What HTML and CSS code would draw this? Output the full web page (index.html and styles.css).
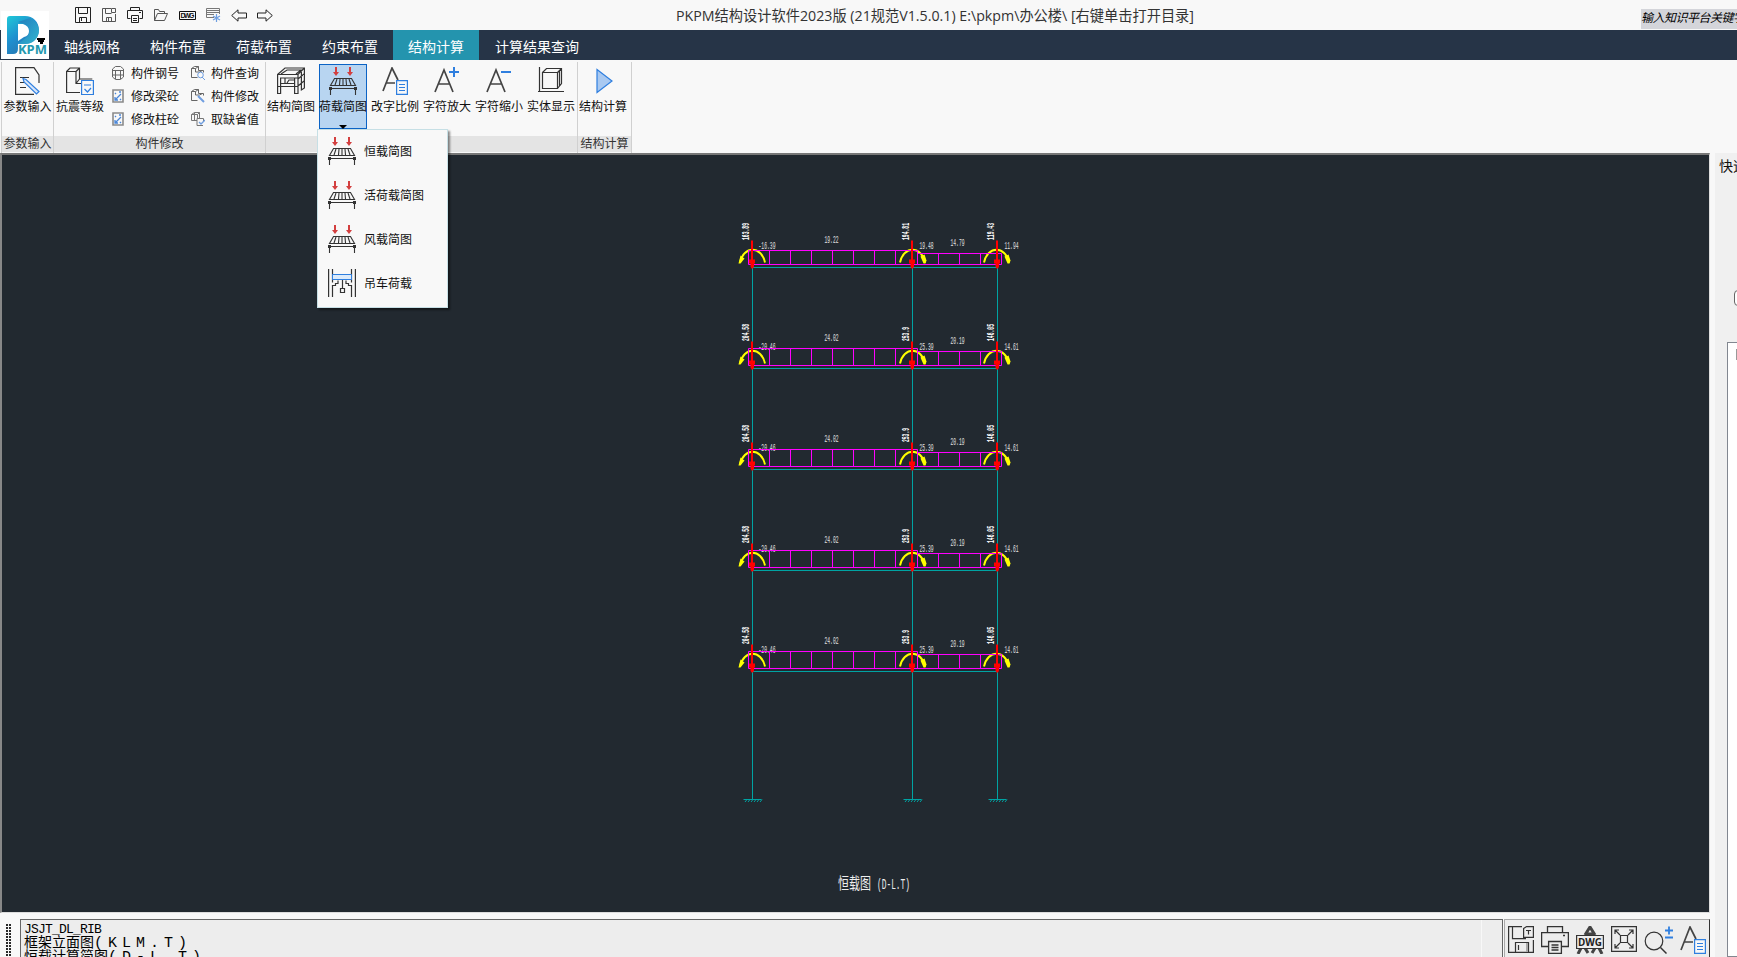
FILE: index.html
```html
<!DOCTYPE html>
<html lang="zh-CN">
<head>
<meta charset="utf-8">
<title>PKPM结构设计软件2023版</title>
<link rel="stylesheet" href="styles.css">
</head>
<body>
<svg class="defs" width="0" height="0">
  <symbol id="i-load" viewBox="0 0 28 28"><g fill="none" stroke="#333" stroke-width="1.1"><path d="M5.5 11.5h17l4 7h-25zM8 12l-2 6M11 12l-.5 6M14 12v6M17 12l.5 6M20 12l2 6M1.500 21.500h25M1.500 20v8M26.500 20v8"/></g><path fill="#333" d="M0 20h3v3H0zM25 20h3v3h-3z"/><path fill="#d33f3f" d="M6 0h2v5h2L7 9 4 5h2zM20 0h2v5h2l-3 4-3-4h2z"/></symbol>
  <symbol id="i-save" viewBox="0 0 16 16"><path fill="none" stroke="#222" d="M.5.5h15v15H.5zM3.500.500v6h9v-6M4.500 15.500v-5h7v5M6.500 11v3"/></symbol>
  <symbol id="i-print" viewBox="0 0 28 28"><path fill="none" stroke="#333" stroke-width="1.3" d="M6.500 6V.6h15V6M7 20.500H.6V6.600h26.800v13.900H21M7.600 15.500h12.800v12H7.600zM10.500 19h7M10.500 21.500h7M10.500 24h7M22 9.500h2"/></symbol>
  <symbol id="i-text" viewBox="0 0 26 28"><path fill="none" stroke="#444" stroke-width="1.700" d="M1 24L10 1l6 12M4.500 16H13"/><path fill="#f8f8f8" stroke="#2f7fdf" stroke-width="1.200" d="M14.600 13.600h10.800v13.800H14.600zM17 17.500h6M17 20.500h6M17 23.500h6"/></symbol>
  <symbol id="i-edit" viewBox="0 0 14 14"><path fill="none" stroke="#8a8a8a" stroke-width="1.600" d="M2 1h10v12H2z"/><path fill="none" stroke="#4a86d8" stroke-width="1.300" d="M4 11l6-6M4 4l1 1M9 10l1 1M4 8v3h3M8 3h2"/></symbol>
  <symbol id="i-part" viewBox="0 0 14 14"><path fill="none" stroke="#666" d="M.5 2.500h4v3.500h4M.500 2.500v9h6M.500 2.500l3-2h4l-3 2M7.500.500v4h5v2M8.500 6l3-1.500"/></symbol>
</svg>
<header class="titlebar">
  <div class="quick">
    <svg width="16" height="16"><use href="#i-save"/></svg>
    <svg width="14" height="14" viewBox="0 0 14 14"><path fill="none" stroke="#555" d="M9 .5H.5v13h13V6M3.500.500v5h6M4.500 13.500v-4h5v4M6.500 10v3M9.500.500h4v4h-4z"/></svg>
    <svg width="17" height="16" viewBox="0 0 17 16"><path fill="none" stroke="#222" d="M3.500 3.500v-3h9v3M3.500 11.500h-3v-8h15v8h-3M4.500 8.500h7v7h-7zM6 11.500h4M6 13.500h4M12 5.500h2"/></svg>
    <svg width="14" height="12" viewBox="0 0 14 12"><path fill="none" stroke="#555" d="M.5 11.500v-11h4l1 2h5v2M.500 11.500l3-7h10l-3 7z"/></svg>
    <svg width="17" height="9" viewBox="0 0 17 9"><path fill="#f8f8f8" stroke="#111" d="M.5.500h16v8H.500z"/><text class="dwg-sm" x="1.500" y="7" textLength="14">DWG</text></svg>
    <svg width="15" height="15" viewBox="0 0 15 15"><path fill="none" stroke="#777" d="M8 9.500H.500v-9h13V6M0 2.500h14M0 4.500h14M0 6.500h8"/><path stroke="#6f9ee0" stroke-width="1.200" d="M10.500 6v8M7 8l7 4M7 12l7-4"/></svg>
    <svg width="16" height="13" viewBox="0 0 16 13"><path fill="none" stroke="#222" d="M.7 6.500L7 .800V4h8.500v5H7v3.200z"/></svg>
    <svg width="16" height="13" viewBox="0 0 16 13"><path fill="none" stroke="#222" d="M15.300 6.500L9 .800V4H.500v5H9v3.200z"/></svg>
  </div>
  <div class="title"><svg width="530" height="26"><text x="0" y="17" textLength="518" lengthAdjust="spacingAndGlyphs">PKPM结构设计软件2023版 (21规范V1.5.0.1) E:\pkpm\办公楼\ [右键单击打开目录]</text></svg></div>
  <div class="search">输入知识平台关键字</div>
</header>
<nav class="tabs">
  <div class="logo">
    <svg width="48" height="48" viewBox="0 0 48 48"><defs><linearGradient id="lg" x1="0" y1="0" x2=".7" y2="1"><stop offset="0" stop-color="#1fc9d8"/><stop offset=".5" stop-color="#1f8fcf"/><stop offset="1" stop-color="#2a70a8"/></linearGradient><linearGradient id="lg2" x1="0" y1="0" x2="1" y2="1"><stop offset="0" stop-color="#2468b0"/><stop offset="1" stop-color="#35d3dc"/></linearGradient></defs>
      <path fill="url(#lg)" d="M6 8q0-3 3-3h15c8 0 14 6 14 14s-6 14-14 14h-7v5q0 5-5 5H6z"/><path fill="url(#lg2)" d="M17 11l6 2q8 4 4 12l-10 8h7c8 0 14-6 14-14q-1-8-9-12z" opacity=".7"/><path fill="#fff" d="M17 13h5q6 2 6 7t-5 6l-6 4z"/>
      <path d="M36 27h8v2h-1v2h-1v2h-3v-2h-2v-2h-1z"/><text class="kpm" x="17" y="43" textLength="29" lengthAdjust="spacingAndGlyphs">KPM</text></svg>
  </div>
  <span class="tab">轴线网格</span><span class="tab">构件布置</span><span class="tab">荷载布置</span><span class="tab">约束布置</span><span class="tab on">结构计算</span><span class="tab">计算结果查询</span>
</nav>
<section class="ribbon">
  <div class="group">
    <div class="tools"><div class="tool"><svg width="28" height="28" viewBox="0 0 28 28"><path fill="none" stroke="#333" stroke-width="1.200" d="M25 16V8l-5-7.400H1.600v26.800H20M6 10.500h9M6 15.500h8M6 20.500h6"/><path fill="#d7e6fa" stroke="#2f7fdf" stroke-width="1.200" d="M9 11.500l3 1 13 12-2.500 2.500L10 15z"/></svg>参数输入</div></div>
    <div class="caption">参数输入</div>
  </div>
  <div class="group">
    <div class="tools">
      <div class="tool"><svg width="28" height="28" viewBox="0 0 28 28"><path fill="none" stroke="#333" stroke-width="1.200" d="M14 25.500H.6V4.500H10v12h5M.600 4.500L4 1h9.500v11h12.800M10 4.500L13.500 1M10 16.500l3.500-4.500"/><path fill="#f8f8f8" stroke="#2f7fdf" stroke-width="1.200" d="M15.600 13.500h11.800v14H15.600zM18 18h7M18.500 22l3 3 3.500-4"/></svg>抗震等级</div>
      <div class="mini-grid">
        <div class="mini"><svg width="14" height="14" viewBox="0 0 14 14"><path fill="none" stroke="#666" d="M1.500 3l3-2.500h5l3 2.500v8l-3 2.500h-5l-3-2.500zM1.500 4.500h11M4.500 5v8M9.500 5v8M1 9h12"/></svg>构件钢号</div>
        <div class="mini"><svg width="14" height="14"><use href="#i-part"/><circle cx="9.500" cy="9" r="2.800" fill="#f8f8f8" stroke="#6f9ee0"/><path stroke="#6f9ee0" d="M11 11l3 3"/></svg>构件查询</div>
        <div class="mini"><svg width="14" height="14"><use href="#i-edit"/></svg>修改梁砼</div>
        <div class="mini"><svg width="14" height="14"><use href="#i-part"/><path stroke="#6f9ee0" stroke-width="2" d="M7 7l6 6"/></svg>构件修改</div>
        <div class="mini"><svg width="14" height="14"><use href="#i-edit"/></svg>修改柱砼</div>
        <div class="mini"><svg width="14" height="14" viewBox="0 0 14 14"><path fill="none" stroke="#777" d="M.5 2.500l3-2h5v6M.500 2.500h6v6h-6zM6.500 2.500l2-2M3.500.500v8"/><path fill="#f8f8f8" stroke="#777" d="M12 13.500H6v-7h6.500v3"/><path stroke="#6f9ee0" stroke-width="1.300" fill="none" d="M8 10l2 2 4-4"/></svg>取缺省值</div>
      </div>
    </div>
    <div class="caption">构件修改</div>
  </div>
  <div class="group">
    <div class="tools">
      <div class="tool"><svg width="28" height="28" viewBox="0 0 28 28"><path fill="none" stroke="#333" stroke-width="1.200" d="M.600 7.500L8 1h19.400L21 7.500zM.600 7.500v19h3V11h14v15.500h3.400v-19M3.600 11h17.400M4 7L10 3h14l-5 4M27.400 1v20l-3 2V5M.600 19.500H21M4 16.500h14M8 11v5M21 19l6-5M21 12l6-5M10 16l2-3h6"/></svg>结构简图</div>
      <div class="tool active"><svg width="28" height="28"><use href="#i-load"/></svg>荷载简图<i class="caret"></i>
        <div class="menu">
          <div class="item"><svg width="28" height="28"><use href="#i-load"/></svg>恒载简图</div>
          <div class="item"><svg width="28" height="28"><use href="#i-load"/></svg>活荷载简图</div>
          <div class="item"><svg width="28" height="28"><use href="#i-load"/></svg>风载简图</div>
          <div class="item"><svg width="28" height="28" viewBox="0 0 28 28"><path fill="none" stroke="#333" stroke-width="1.200" d="M.600 0v28M27.400 0v28M4.500 0v13.500M10 11.500v3H7.500v2h-3V28M23.500 0v13.500M18 11.500v3h2.500v2h3V28M14.500 11v8M12.500 19.500h4v4h-4z"/><path fill="#dcebfb" stroke="#2f7fdf" d="M4.500 5.500h19v5h-19z"/></svg>吊车荷载</div>
        </div>
      </div>
      <div class="tool"><svg width="26" height="28"><use href="#i-text"/></svg>改字比例</div>
      <div class="tool"><svg width="26" height="28" viewBox="0 0 26 28"><path fill="none" stroke="#444" stroke-width="1.700" d="M1 25L10 3l9 22M4.500 17h11"/><path stroke="#2f7fdf" stroke-width="2" d="M15 5h10M20 0v10"/></svg>字符放大</div>
      <div class="tool"><svg width="26" height="28" viewBox="0 0 26 28"><path fill="none" stroke="#444" stroke-width="1.700" d="M1 25L10 3l9 22M4.500 17h11"/><path stroke="#2f7fdf" stroke-width="2" d="M15 5h10"/></svg>字符缩小</div>
      <div class="tool"><svg width="26" height="28" viewBox="0 0 26 28"><path fill="none" stroke="#333" stroke-width="1.200" d="M1.500 0v24.500M0 24.500h26M4.500 5.500h15v16h-15zM4.500 5.500l4-4h15v15l-4 5M19.500 5.500l4-4M21.500 4v16"/></svg>实体显示</div>
    </div>
    <div class="caption"></div>
  </div>
  <div class="group">
    <div class="tools"><div class="tool"><svg width="28" height="28" viewBox="0 0 28 28"><path fill="#a9c9f1" stroke="#2f7fdf" stroke-width="1.200" d="M8 2.500l15 11.500L8 25.500z"/></svg>结构计算</div></div>
    <div class="caption">结构计算</div>
  </div>
</section>
<main class="work">
  <div class="canvas"><svg id="frame" width="1707" height="757" viewBox="2 155 1707 757"></svg></div>
  <aside class="side"><div class="side-title">快速</div><div class="radio"></div><div class="list"><i></i></div></aside>
  <footer class="bottom">
    <div class="grip"></div>
    <div class="console">
      <div class="line mono">JSJT_DL_RIB</div>
      <div class="line">框架立面图<span class="wide">(KLM.T)</span></div>
      <div class="line">恒载计算简图<span class="wide">(D-L.T)</span></div>
    </div>
    <div class="viewbar">
      <svg width="26" height="27" viewBox="0 0 26 27"><path fill="none" stroke="#333" stroke-width="1.200" d="M14 .6H.6v25.800h24.800V14M4.500.600v12H18M7.500 26v-9.500h13V26M10.500 19v5"/><path fill="#eee" stroke="#333" stroke-width="1.200" d="M15.600 2.600l3-2h6.800v10.800h-9.800zM18 4.500h5M20.500 4.500v4"/><path fill="#aaa" d="M18 17h2v9h-2z"/></svg>
      <svg width="28" height="28"><use href="#i-print"/></svg>
      <svg width="28" height="28" viewBox="0 0 28 28"><path fill="none" stroke="#444" stroke-width="3" d="M9 9l5-8 5 8M6 20l-4 8M22 20l4 8M9 8h10M9 22l3 5M19 22l-3 5"/><path fill="#eee" stroke="#333" stroke-width="1.200" d="M.6 9.500h26.800v13H.6z"/><text class="dwg" x="2" y="20" textLength="24" lengthAdjust="spacingAndGlyphs">DWG</text></svg>
      <svg width="26" height="26" viewBox="0 0 26 26"><path fill="none" stroke="#333" stroke-width="1.200" d="M.6.600h24.800v24.800H.600zM9.500 9.500h7v7h-7zM9 9L4 4M17 9l5-5M9 17l-5 5M17 17l5 5M4 8V4h4M18 4h4v4M4 18v4h4M22 18v4h-4"/></svg>
      <svg width="29" height="28" viewBox="0 0 29 28"><circle cx="10" cy="15" r="8.800" fill="none" stroke="#333" stroke-width="1.200"/><path stroke="#333" stroke-width="1.500" d="M16.500 21.500l6 6"/><path stroke="#2f7fdf" stroke-width="1.800" d="M21 4.500h8M25 .500v8M21 11.500h8"/></svg>
      <svg width="26" height="28"><use href="#i-text"/></svg>
    </div>
  </footer>
</main>
<script src="script.js"></script>
</body>
</html>
```

FILE: styles.css
```css
* { box-sizing: border-box; }
html, body { height: 100%; }
body { margin: 0; overflow: hidden; background: #f8f8f8; color: #111; font: 12px/16px "Noto Sans CJK SC", sans-serif; display: grid; grid-template-rows: 30px 30px 93px 1fr; width: 1737px; height: 957px; white-space: nowrap; }
svg { flex: none; display: block; }
.defs { position: absolute; }

.titlebar { display: flex; align-items: flex-start; height: 30px; }
.quick { display: flex; align-items: center; gap: 10px; height: 30px; width: 676px; padding-left: 75px; }
.quick svg:nth-child(2), .quick svg:nth-child(3), .quick svg:nth-child(5) { margin-left: 1px; }
.dwg-sm { font: bold 7px "Liberation Sans", sans-serif; fill: #111; }
.title { flex: 1; padding-top: 4px; }
.title svg { overflow: visible; }
.title text { font-size: 15px; font-family: "Open Sans", "Noto Sans CJK SC", sans-serif; fill: #333; }
.search { width: 96px; height: 20px; margin-top: 9px; overflow: hidden; background: #d4d5da; font-style: italic; line-height: 15px; letter-spacing: -.5px; color: #000; }

.tabs { display: flex; background: #263447; color: #fff; font-size: 14px; line-height: 33px; }
.logo { width: 48px; height: 48px; margin: -19px 0 0 1px; background: #fff; position: relative; }
.kpm { font: bold 13px "Open Sans", sans-serif; fill: #2398ae; stroke: #fff; stroke-width: 2px; paint-order: stroke; }
.tab { padding: 0 15px; height: 30px; }
.tab.on { background: #2494ae; }
.tab.on + .tab { padding-left: 16px; }

.ribbon { display: flex; padding: 2px 0 0 1px; height: 93px; }
.group { display: flex; flex-direction: column; border-left: 1px solid #d0d0d0; }
.group:last-child { border-right: 1px solid #d0d0d0; }
.tools { display: flex; height: 74px; padding: 2px 0 0 0; }
.tool { width: 52px; height: 65px; padding-top: 3px; display: flex; flex-direction: column; align-items: center; gap: 3px; position: relative; }
.tool.active { width: 48px; margin: 0 2px; background: #b8d5f1; box-shadow: inset 0 0 0 1px #0b63c5; }
.group:first-child .tool { width: 51px; }
.group:nth-child(3) .tool:first-child { margin-left: -1px; }
.group:last-child .tool { margin: 0 2px 0 -1px; }
.caret { position: absolute; bottom: 0; border: 4.500px solid transparent; border-top: 4px solid #000; border-bottom: 0; }
.mini-grid { display: grid; grid-template-columns: 80px 73px; grid-template-rows: repeat(3, 23px); padding: 0 0 0 5px; width: 159px; margin-top: -3px; }
.mini { display: flex; align-items: center; gap: 6px; }
.caption { height: 16px; background: #e4e4e4; text-align: center; color: #333; line-height: 14px; }

.menu { position: absolute; z-index: 5; left: -2px; top: 65px; width: 131px; height: 179px; background: #f8f8f8; border: 1px solid #c6dfe5; box-shadow: 2px 2px 2px rgba(0,0,0,.45); }
.item { height: 44px; display: flex; align-items: center; gap: 8px; padding: 0 0 3px 10px; }

.work { display: grid; grid-template-columns: 1715px 22px; grid-template-rows: 760px 44px; }
.canvas { width: 1710px; height: 760px; background: #222930; border: 1px solid #999; border-width: 2px 1px 1px 2px; border-color: #777 #ddd #ddd #888; overflow: hidden; }
.canvas text { fill: #e2e2e2; font: 10.500px "Liberation Mono", monospace; }
.canvas .axial { fill: #fff; font-weight: bold; }
.canvas .drawing-name { fill: #eee; font: 15.500px "Liberation Mono", "Noto Sans CJK SC", monospace; }
.side { grid-column: 2; grid-row: 1 / 3; background: #f0f0f0; overflow: hidden; display: flex; flex-direction: column; }
.side-title { padding: 2px 0 0 4px; font-size: 14px; line-height: 20px; height: 137px; }
.radio { width: 12px; height: 16px; margin-left: 19px; border: 1px solid #666; border-radius: 4px; background: #fff; }
.list { flex: 1; margin: 36px 0 0 12px; border: 1px solid #828790; border-right: 0; background: #fff; width: 12px; padding: 6px 0 0 8px; }
.list i { display: block; height: 11px; width: 4px; background: #999; }

.bottom { display: flex; padding-top: 6px; overflow: hidden; }
.grip { width: 6px; height: 38px; margin: 5px 8px 0 6px; background: radial-gradient(circle at 1px 1px, #222 .7px, transparent .9px) 0 0 / 3px 3px; }
.console { width: 1483px; height: 50px; background: linear-gradient(90deg, #ededed 0 1460px, #f8f8f8 1460px 1461px, #ededed 1461px); border: 1px solid #666; padding: 3px; font-size: 14px; line-height: 14px; overflow: hidden; color: #000; }
.line { height: 14px; }
.line.mono { height: 11px; font: 13px/13px "Liberation Mono", monospace; letter-spacing: -.8px; }
.wide { font: 15px/14px "Liberation Mono", monospace; letter-spacing: 5px; }
.viewbar { width: 206px; height: 50px; margin-left: 1px; background: #ededed; border: 1px solid #777; border-color: #aaa #333 #aaa #aaa; display: flex; align-items: flex-start; gap: 7px; padding: 6px 0 0 3px; }
.dwg { font: bold 11px "Open Sans", sans-serif; fill: #222; }
```

FILE: script.js
```javascript
// Elevation of the frame: five floors, three columns, dead loads.
const columns = [752.5, 912.5, 997.5];
const roof = { h: 17, axial: ['163.89', '194.81', '119.43'], moment: ['-16.39', '19.48', '11.94'], span: ['19.22', '14.79'] };
const typical = { h: 20, axial: ['204.58', '253.9', '146.05'], moment: ['-20.46', '25.39', '14.61'], span: ['24.02', '20.19'] };
const floors = [267.5, 368.5, 469.5, 570.5, 671.5];

function label(x, y, value, length) {
  return `<text x="${x}" y="${y}" textLength="${length}" lengthAdjust="spacingAndGlyphs">${value}</text>`;
}

let out = '';
columns.forEach(x => {
  out += `<path stroke="#00a3a3" d="M${x} 267V799"/>`;
  let hatch = `M${x - 9} 799.5h18`;
  for (let i = 0; i < 6; i++) hatch += `M${x - 5.5 + i * 3} 799.5l-2 2.500`;
  out += `<path stroke="#00a3a3" fill="none" d="${hatch}"/>`;
});

floors.forEach((b, n) => {
  const f = n === 0 ? roof : typical;
  out += `<path stroke="#00a3a3" d="M752.500 ${b}H997.500"/>`;
  let d = `M748.500 ${b - f.h}H917.500V${b - 3}H748.500zM917.500 ${b - f.h + 3}H1001.500V${b - 3}H917.500z`;
  for (let x = 769.5; x < 900; x += 21) d += `M${x} ${b - f.h}V${b - 3}`;
  for (let x = 938.5; x < 990; x += 21) d += `M${x} ${b - f.h + 3}V${b - 3}`;
  columns.forEach((x, i) => {
    const c = x - (i === 2 ? 1 : 0);
    out += `<path stroke="#ff0" stroke-width="2" fill="none" d="M${c - 12.5} ${b - 5}C${c - 9} ${b - 22} ${c + 9} ${b - 22} ${c + 12.5} ${b - 5}"/>`;
    out += i === 0
      ? `<path fill="#ff0" d="M${c - 12} ${b - 12}l4 3-4 5h-2z"/>`
      : `<path fill="#ff0" d="M${c + 8} ${b - 11}l4-2 2 6-1 3h-2z"/>`;
    const length = f.axial[i].length === 5 ? 14 : 17;
    out += `<text class="axial" transform="translate(${x - 3.5} ${b - 27.5}) rotate(-90)" textLength="${length}" lengthAdjust="spacingAndGlyphs">${f.axial[i]}</text>`;
    out += label([758.5, 919.5, 1004.5][i], b - 19, f.moment[i], i ? 14 : 17);
  });
  out += `<path stroke="#f0f" fill="none" d="${d}"/>`;
  columns.forEach(x => {
    out += `<path fill="#f00" d="M${x - 1.5} ${b - 27}h2v19h2v4h-1v3l-1 2h-1.500l-1-2v-3h-1.500v-4h2z"/>`;
  });
  out += label(824.5, b - f.h - 7.5, f.span[0], 14);
  out += label(950.5, b - f.h - 4.5, f.span[1], 14);
});

out += '<text class="drawing-name" x="838" y="889" textLength="33" lengthAdjust="spacingAndGlyphs">恒载图</text>';
out += '<text class="drawing-name" x="877" y="889" textLength="33" lengthAdjust="spacingAndGlyphs">(D-L.T)</text>';
document.getElementById('frame').innerHTML = out;
```
